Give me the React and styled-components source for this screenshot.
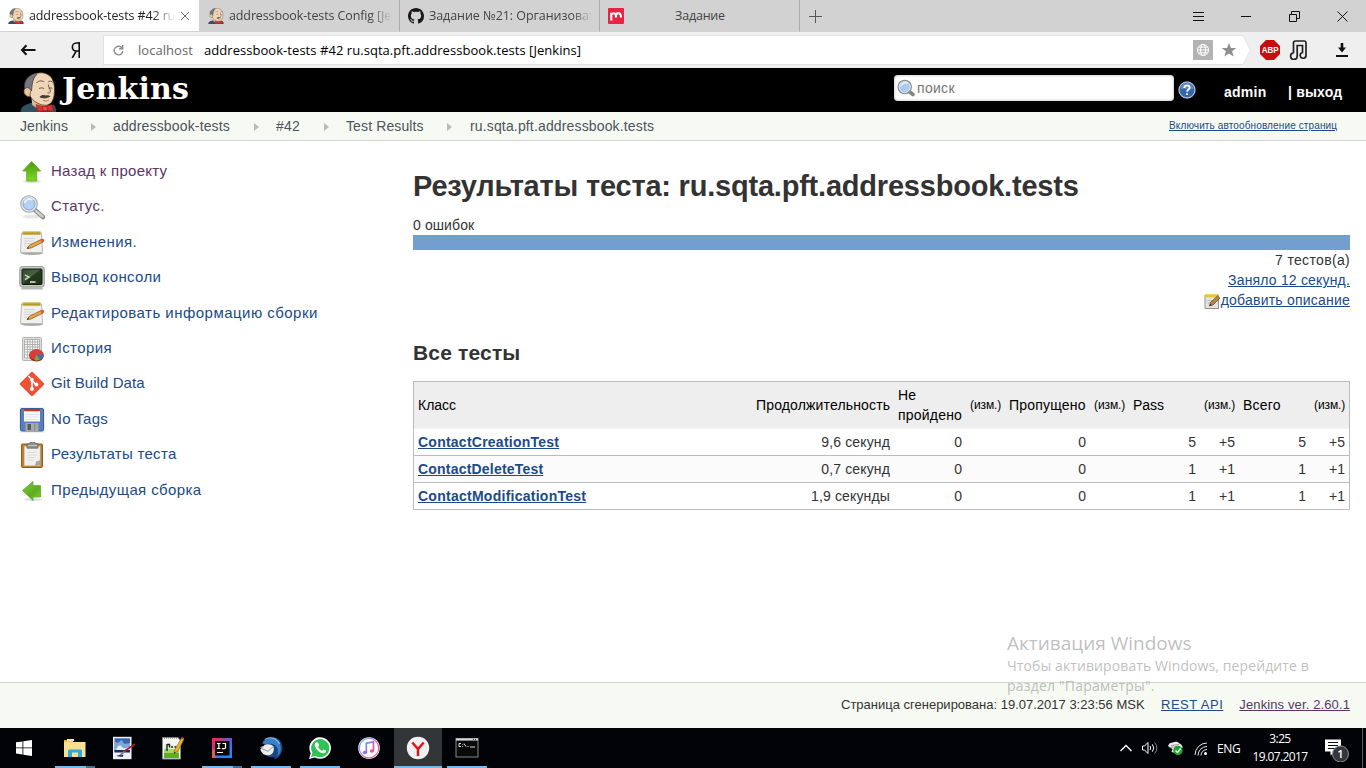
import React from "react";
import styled, { createGlobalStyle, css } from "styled-components";

const sans = '"Liberation Sans", Arial, sans-serif';
const ui = '"Open Sans", "Noto Sans", sans-serif';
const link = "#204a87";
const visited = "#5c3566";

const Global = createGlobalStyle`
  * { box-sizing: border-box; }
  body { margin: 0; background: #fff; font-family: ${sans}; font-size: 14px; color: #333; overflow: hidden; }
  svg { display: block; flex: none; }
`;

const track = css`letter-spacing: ${(p) => p.$ls || 0}px; white-space: nowrap;`;

const Screen = styled.div`
  width: 1366px; height: 768px; position: relative; display: flex; flex-direction: column; overflow: hidden;
`;

/* ---------- browser chrome ---------- */
const TabBar = styled.div`height: 32px; background: #d2d2d2; display: flex; font-family: ${ui}; flex: none;`;
const Tab = styled.div`
  width: 200px; height: 32px; padding: 0 ${(p) => p.$end || 7}px 0 8px; display: flex; align-items: center; gap: 5px;
  background: ${(p) => (p.$active ? "#fff" : "#d2d2d2")};
  border-right: 1px solid ${(p) => (p.$active ? "#d2d2d2" : "#acacac")};
  border-bottom: 1px solid ${(p) => (p.$active ? "#d0d0d0" : "#d2d2d2")};
`;
const TabTitle = styled.div`
  flex: 1; overflow: hidden; font-size: 12.5px; line-height: 20px; color: ${(p) => p.$color || "#444"};
  text-align: ${(p) => (p.$center ? "center" : "left")};
  ${track}
  ${(p) => p.$fade && css`mask-image: linear-gradient(90deg, #000 calc(100% - ${p.$fade}px), transparent);`}
`;
const NewTab = styled.div`width: 31px; display: flex; align-items: center; justify-content: center;`;
const WindowButtons = styled.div`margin-left: auto; display: flex; align-items: center;`;
const WindowButton = styled.div`width: 48px; height: 32px; display: flex; align-items: center; padding-left: 19px;`;

const Toolbar = styled.div`
  height: 36px; background: #efefef; display: flex; align-items: center; flex: none; font-family: ${ui}; padding-left: 20px;
`;
const ToolSlot = styled.div`width: ${(p) => p.$w}px; display: flex; align-items: center; flex: none;`;
const Omnibox = styled.div`
  width: 1140px; height: 30px; background: #fff; border: 1px solid #e2e2e2; border-right: 0; display: flex; align-items: center;
  padding-left: 9px; font-size: 13px; color: #000; flex: none;
`;
const Host = styled.span`margin-left: 13px; width: 56px; color: #666; line-height: 20px; ${track}`;
const PageTitle = styled.span`margin-left: 10px; line-height: 20px; ${track}`;
const OmniActions = styled.div`margin-left: auto; display: flex; align-items: center; gap: 8px; padding-right: 6px;`;

/* ---------- Jenkins header ---------- */
const Header = styled.header`height: 44px; background: #000; display: flex; flex: none; padding-left: 20px; color: #fff;`;
const Logo = styled.div`display: flex; width: 874px; align-items: flex-end;`;
const Wordmark = styled.span`
  font-family: "DejaVu Serif", serif; font-weight: 700; font-size: 30px; line-height: 40px; margin-left: 5px; margin-bottom: 3px; ${track}
`;
const Search = styled.div`
  width: 280px; height: 26px; margin-top: 7px; border-radius: 4px; background: #fff; display: flex; align-items: center;
  padding-left: 3px; gap: 2px; color: #757575; box-shadow: inset 0 0 3px #aaa; font-size: 14px;
`;
const SearchText = styled.span`${track}`;
const Help = styled.div`margin: 13px 0 0 4px; width: 46px;`;
const HeaderLink = styled.span`font-weight: 700; font-size: 14px; line-height: 20px; margin-top: 14px; width: ${(p) => p.$w}px; ${track}`;

const Breadcrumbs = styled.nav`
  height: 29px; background: #f6faf2; border-bottom: 1px solid #d3d7cf; display: flex; align-items: center; flex: none;
  padding: 0 29px 0 20px; color: #4d545d;
`;
const Crumb = styled.span`width: ${(p) => p.$w}px; line-height: 20px; flex: none; ${track}`;
const CrumbArrow = styled.span`
  width: 5px; height: 8px; flex: none; margin-top: 2px; background: #bababa; clip-path: polygon(0 0, 100% 50%, 0 100%); margin-right: ${(p) => p.$after}px;
`;
const AutoRefresh = styled.a`
  margin-left: auto; width: 168px; font-size: 10px; line-height: 14px; color: ${link}; text-decoration: underline; ${track}
`;

/* ---------- page body ---------- */
const Body = styled.div`height: 541px; display: flex; flex: none;`;
const SidePanel = styled.aside`width: 413px; padding: 12.400px 0 0 19px;`;
const Task = styled.a`
  height: 35.4px; display: flex; align-items: center; gap: 6px; font-size: 15px; color: ${(p) => (p.$visited ? visited : link)};
`;
const TaskIcon = styled.span`width: 26px; height: 26px; flex: none; margin-top: 2px;`;
const TaskLabel = styled.span`line-height: 20px; ${track}`;

const Main = styled.main`width: 937px; padding-top: 27px;`;
const Title = styled.h1`margin: 0; font-size: 29px; line-height: 36px; font-weight: 700; ${track}`;
const Failures = styled.div`margin-top: 11px; line-height: 20px; ${track}`;
const ResultBar = styled.div`height: 15px; background: #729fcf;`;
const Summary = styled.div`display: flex; flex-direction: column; align-items: flex-end; line-height: 20px;`;
const SummaryText = styled.span`${track}`;
const SummaryLink = styled.a`color: ${link}; text-decoration: underline; ${track}`;
const EditRow = styled.span`display: flex; align-items: center; height: 20px;`;
const NoteIcon = styled.span`margin-top: 3px;`;
const SubTitle = styled.h2`margin: 30px 0 0; font-size: 21px; line-height: 26px; ${track}`;

const Table = styled.div`margin-top: 15px; border: 1px solid #bbb;`;
const Row = styled.div`
  display: grid; grid-template-columns: 338px 142px 72px 39px 85px 39px 71px 39px 71px 39px; align-items: center;
  height: ${(p) => (p.$last ? 26 : 27)}px; border-bottom: ${(p) => (p.$last ? 0 : 1)}px solid #bbb;
  background: ${(p) => (p.$odd ? "#fbfbfb" : "#fff")};
`;
const HeadRow = styled(Row)`height: 47px; background: #eee; border-bottom: 1px solid #f4f4f4; color: #000;`;
const Cell = styled.div`
  padding: 0 4px; line-height: 20px; text-align: ${(p) => (p.$right ? "right" : "left")};
  font-size: ${(p) => (p.$small ? 12 : 14)}px;
  letter-spacing: ${(p) => p.$ls || 0}px; white-space: ${(p) => (p.$wrap ? "pre-line" : "nowrap")};
`;
const TestLink = styled.a`font-weight: 700; color: ${link}; text-decoration: underline; ${track}`;

const Footer = styled.footer`
  height: 46px; background: #f6faf2; border-top: 1px solid #d3d7cf; flex: none; display: flex; justify-content: flex-end;
  padding: 12px 16px 0 0; font-size: 13px; line-height: 20px;
`;
const FooterText = styled.span`width: ${(p) => p.$w}px; color: #333; ${track}`;
const FooterLink = styled.a`color: ${(p) => (p.$visited ? visited : link)}; text-decoration: underline; margin-right: ${(p) => p.$gap || 0}px; ${track}`;

const Watermark = styled.div`
  position: absolute; left: 1007px; top: 630px; font-family: ${ui}; color: rgba(150, 150, 150, 0.62); pointer-events: none;
`;
const WatermarkTitle = styled.div`font-size: 19px; line-height: 26px; ${track}`;
const WatermarkText = styled.div`font-size: 14px; line-height: 20px; ${track}`;

/* ---------- taskbar ---------- */
const Taskbar = styled.div`
  height: 40px; background: #010307; display: flex; flex: none; color: #fff; font-family: ${ui}; font-size: 12px;
`;
const StartButton = styled.div`width: 48px; margin-right: 3px; display: flex; align-items: center; justify-content: center;`;
const AppSlot = styled.div`
  width: 48px; margin-right: 1px; height: 40px; padding-top: 8px; display: flex; flex-direction: column; align-items: center;
  justify-content: space-between; background: ${(p) => (p.$active ? "#333639" : "transparent")};
`;
const RunMark = styled.div`
  height: 2px; width: ${(p) => (p.$wide ? 48 : 40)}px;
  background: ${(p) => (p.$stack ? "linear-gradient(90deg,#76b9ed 31px,#486f8f 31px)" : p.$on ? "#76b9ed" : "transparent")};
`;
const Tray = styled.div`margin-left: auto; display: flex; align-items: center;`;
const TrayIcon = styled.div`width: ${(p) => p.$w}px; display: flex; flex: none;`;
const Lang = styled.span`width: 32px; ${track}`;
const Clock = styled.div`width: 62px; text-align: center; line-height: 18px; ${track}`;
const DesktopEdge = styled.div`width: 4px; height: 40px; border-left: 1px solid #5a5c5f;`;

/* ---------- drawings ---------- */
const Butler = ({ w, h }) => (
  <svg width={w} height={h} viewBox="0 0 36 40" preserveAspectRatio="none">
    <path d="M.5 40c.5-4 2-6 6-7.500l5-2 12 4 9-2c2 1.500 2.700 4 2.700 7.500z" fill="#335061" />
    <path d="M11 25l1 8 7 5 7-3 2-4z" fill="#dcbd97" />
    <path d="M8 18C6 10 9 3 16 1.300c7-1.800 13 1 15.500 6 2 4 2.300 9 2 13-.2 5-1.500 9-4 11.200-3 2.600-8 2.200-12-.2C12 28.800 9 24 8 18z" fill="#f0d6b7" stroke="#3d3328" strokeWidth=".7" />
    <path d="M4.500 17C3 10 7 3.500 15 1.300l1.500 1.200C13.500 5 12.500 8.500 12 12c-.3 2-.5 4-.8 7-1-2.500-3.900-4-6.700-2z" fill="#77777b" stroke="#2c2a2a" strokeWidth=".6" />
    <path d="M5 16.500c-2.500 2.500-1 8 4.500 8.300l1-6.300c-1.200-2.500-3.700-3.700-5.500-2z" fill="#e9c79d" stroke="#5a4736" strokeWidth=".7" />
    <path d="M16 11c2-2.600 5.500-2.600 7.500-1M27.500 10c1.500-1.400 3.500-1 4.500.5M18.500 16.500c1.500-.8 3.500-.8 5 0M28 16.500c1-.7 2.500-.7 3.500 0M27.500 12.500c.5 3.500 2.500 5.500 2 7.500-.8 1-1.800 1.200-2.800.8" fill="none" stroke="#5b4737" strokeWidth=".9" />
    <path d="M19 25c1.800-2.200 4.200-2.400 6.200-1.500 1.700-.6 3.300-.2 4.300 1.100-2.800 2-7.500 2.600-10.500.4z" fill="#4a3c33" />
    <path d="M22.500 28.500c1.800.7 3.800.7 5.500-.4" stroke="#a06e52" fill="none" strokeWidth=".9" />
    <path d="M15.500 32.500l7 2 8.500-2 1.700 6.700-7-.7-8.500 1.500z" fill="#d8302c" stroke="#8a1a17" strokeWidth=".5" />
    <path d="M22 34.300h4l1 4.500h-4.700z" fill="#f04a44" stroke="#7e1815" strokeWidth=".6" />
  </svg>
);
const Magnifier = ({ size }) => (
  <svg width={size} height={size} viewBox="0 0 26 26">
    <ellipse cx="13" cy="22.500" rx="9" ry="2" fill="#ddd" opacity=".7" />
    <path d="M16 16l8 7" stroke="#8c8d88" strokeWidth="4.500" strokeLinecap="round" />
    <path d="M17 17l6.500 5.500" stroke="#cfd0cc" strokeWidth="2.400" strokeLinecap="round" />
    <circle cx="10" cy="10" r="8.200" fill="#a9c7ee" stroke="#a5a6a2" strokeWidth="1.200" />
    <circle cx="10" cy="10" r="6.900" fill="#b9d4f5" stroke="#e5e8ea" strokeWidth="1.600" />
    <circle cx="10" cy="10" r="6" fill="#b4d0f3" stroke="#7da2d4" strokeWidth=".9" />
    <path d="M5.500 9a5 5 0 0 1 8-3" stroke="#e8f2fd" strokeWidth="2" fill="none" />
  </svg>
);
const SearchGlass = () => (
  <svg width="18" height="18" viewBox="0 0 18 18">
    <path d="M12 12.500l4 3" stroke="#85857f" strokeWidth="3.600" strokeLinecap="round" />
    <circle cx="7.700" cy="8" r="6.700" fill="#a9c9f0" stroke="#8f908c" strokeWidth="1.200" />
    <circle cx="7.700" cy="8" r="5.400" fill="none" stroke="#dfe6ee" />
    <path d="M4 7.500a4 4 0 0 1 6.500-2.700" stroke="#e6f1fd" strokeWidth="1.500" fill="none" />
  </svg>
);
const ArrowUp = () => (
  <svg width="26" height="26" viewBox="0 0 26 26">
    <defs><linearGradient id="gUp" x2="0" y2="1"><stop stopColor="#4e9a06" /><stop offset=".5" stopColor="#66b81d" /><stop offset="1" stopColor="#7fdc1e" /></linearGradient></defs>
    <ellipse cx="13" cy="22.500" rx="9" ry="1.500" fill="#ddd" />
    <path d="M12.700 2.500l9 9.500h-4v10h-10v-10h-4z" fill="url(#gUp)" stroke="#5aa61a" strokeWidth=".8" strokeLinejoin="round" />
  </svg>
);
const ArrowLeft = () => (
  <svg width="26" height="26" viewBox="0 0 26 26">
    <defs><linearGradient id="gLf" x2="1" y2="1"><stop stopColor="#7ccb3c" /><stop offset=".6" stopColor="#5ead20" /><stop offset="1" stopColor="#7fd02c" /></linearGradient></defs>
    <ellipse cx="14" cy="21.500" rx="9" ry="1.500" fill="#ddd" />
    <path d="M3.500 12.500L14 3.500v4h7.500v11.500H14v3.500z" fill="url(#gLf)" stroke="#62a638" strokeWidth=".8" strokeLinejoin="round" />
  </svg>
);
const Notepad = () => (
  <svg width="26" height="26" viewBox="0 0 26 26">
    <ellipse cx="13" cy="23.300" rx="11" ry="1.600" fill="#aaa" />
    <path d="M2.500 3h20l1 19.500h-22z" fill="#f0f0ee" stroke="#b9bab6" />
    <rect x="3.500" y="1.500" width="18" height="3.200" fill="#b59a2a" />
    <path d="M4 1.800h18" stroke="#e0ca62" strokeWidth="1.200" strokeDasharray="1.500 1" />
    <path d="M5 8.500h11M5 11h10M5 13.500h9M5 16h5" stroke="#cfcfcd" strokeWidth=".9" />
    <path d="M8 18.500l2.500-3.300L22.500 9.300l1.700 2.600-12 6z" fill="#e5a84e" stroke="#8b5a1a" strokeWidth=".8" />
    <path d="M21.500 9.800l2-1c1-.4 2.300 1.700 1.300 2.400l-1.800 1.200z" fill="#e2533b" />
    <path d="M8 18.500l1-1.500 1.200 1.200z" fill="#222" />
  </svg>
);
const Terminal = () => (
  <svg width="26" height="26" viewBox="0 0 26 26">
    <defs><linearGradient id="gTm" x1="0" y1="0" x2="1" y2="1"><stop stopColor="#2f4a28" /><stop offset=".45" stopColor="#47633f" /><stop offset=".5" stopColor="#243a1f" /><stop offset="1" stopColor="#20331b" /></linearGradient></defs>
    <rect x=".7" y="1.500" width="24.600" height="20.500" rx="2.500" fill="#c9cac6" stroke="#8e8f8b" strokeWidth=".8" />
    <path d="M3 22h20l1 2.500H2z" fill="#b6b7b3" />
    <rect x="3" y="4" width="20" height="15.500" rx="1" fill="url(#gTm)" stroke="#111b0e" />
    <path d="M6 10l4 2-4 2.500M11 17h5.500" stroke="#dfe9dc" strokeWidth="1.300" fill="none" />
    <circle cx="18" cy="21" r=".8" fill="#8ae234" />
  </svg>
);
const History = () => (
  <svg width="26" height="26" viewBox="0 0 26 26">
    <rect x="3.500" y="1.500" width="19" height="23" rx="1" fill="#dededc" stroke="#b4b5b1" />
    <rect x="5.500" y="3.500" width="15" height="18.500" fill="#fafafa" />
    <path d="M5.500 3.500h15v18.500h-15zM8.500 3.500v18.500M11 3.500v18.500M13.500 3.500v18.500M16 3.500v18.500M18.500 3.500v18.500M5.500 6h15M5.500 8.500h15M5.500 11h15M5.500 13.500h15M5.500 16h15M5.500 19h15" stroke="#a6a7a4" strokeWidth=".8" fill="none" />
    <ellipse cx="17.500" cy="19.600" rx="7.300" ry="6" fill="#9c1414" />
    <ellipse cx="17.500" cy="18.600" rx="7" ry="5.400" fill="#dd3b3b" />
    <path d="M17.500 18.600l7-.2c.2 2.800-1.500 4.500-3.800 5.600z" fill="#3d70b8" />
    <path d="M17.500 18.600l3.300 5.400c-1.800.6-3.800.7-5.300.3z" fill="#73b528" />
  </svg>
);
const Git = () => (
  <svg width="26" height="26" viewBox="0 0 26 26">
    <rect x="4" y="4" width="18" height="18" rx="1.400" fill="#f05033" transform="rotate(45 13 13)" />
    <path d="M9.500 5l3.500 4v9M13 9.500l4.300 4.300" stroke="#fff" strokeWidth="1.700" fill="none" />
    <circle cx="12.900" cy="8.700" r="1.900" fill="#fff" /><circle cx="12.900" cy="17.900" r="2" fill="#fff" /><circle cx="17.400" cy="13.500" r="2" fill="#fff" />
  </svg>
);
const Floppy = () => (
  <svg width="26" height="26" viewBox="0 0 26 26">
    <rect width="26" height="26" fill="#eceef0" />
    <rect x="1.500" y="1.500" width="23" height="22.500" rx="1.500" fill="#5680bd" stroke="#3a5f96" />
    <rect x="5" y="2.300" width="16" height="12.200" fill="#fafafa" />
    <rect x="5" y="2" width="16" height="2.200" fill="#d8301f" />
    <path d="M6.500 7.500h13M6.500 10h13M6.500 12.500h13" stroke="#dcdcdc" strokeWidth=".8" />
    <rect x="6.500" y="16" width="13" height="8" fill="#a8aaa9" />
    <rect x="8.500" y="17" width="3.500" height="6" fill="#5a5c5c" />
    <rect x="15" y="16.500" width="1.200" height="7" fill="#888" />
  </svg>
);
const Clipboard = () => (
  <svg width="26" height="26" viewBox="0 0 26 26">
    <rect x="2.500" y="2" width="21" height="23.500" rx="1" fill="#b88237" stroke="#8d5b17" />
    <path d="M5.500 4.500h15.500v19H5.500z" fill="#f1f1f0" stroke="#d5d5d3" strokeWidth=".6" />
    <path d="M8.500 10.500h9M8.500 13h9M8.500 15.500h7M8.500 18h6" stroke="#d5d6d3" strokeWidth=".8" />
    <path d="M21 17.500v6h-7c3 0 3-3 3-4.500 2 .5 3.500 0 4-1.500z" fill="#a6a8a5" />
    <path d="M8 1.800h3V.300h5v1.500h3v4.400H8z" fill="#8f928e" stroke="#61645f" strokeWidth=".7" />
    <path d="M9 3.500h9" stroke="#c4c6c2" />
  </svg>
);
const SmallNote = () => (
  <svg width="17" height="17" viewBox="0 0 17 17">
    <path d="M1 2h13.500v13.500H1z" fill="#e4e5e3" stroke="#8f918d" />
    <path d="M1 1h13.500v3.500H1z" fill="#e8c53a" />
    <path d="M1 1.300h13.500" stroke="#f8e793" strokeDasharray="1.500 1" />
    <path d="M3.500 7.500h7M3.500 10h4" stroke="#bbb" />
    <path d="M5.500 13l1-3.500L13.500 3l2.300 2-6.500 6.800z" fill="#b18745" stroke="#6c4e1d" strokeWidth=".8" />
    <path d="M5.500 13l.6-2 1.500 1.200z" fill="#222" />
  </svg>
);
const GitHub = () => (
  <svg width="16" height="16" viewBox="0 0 16 16">
    <path fill="#1b1817" d="M8 0C3.580 0 0 3.580 0 8c0 3.540 2.290 6.530 5.470 7.590.4.070.55-.17.55-.38 0-.19-.01-.82-.01-1.490-2.010.37-2.530-.49-2.690-.94-.09-.23-.48-.94-.82-1.130-.28-.15-.68-.52-.01-.53.63-.01 1.080.58 1.230.82.72 1.210 1.870.87 2.330.66.07-.52.28-.87.51-1.070-1.780-.2-3.640-.89-3.640-3.950 0-.87.31-1.590.82-2.150-.08-.2-.36-1.020.08-2.120 0 0 .67-.21 2.200.82.64-.18 1.320-.27 2-.27s1.360.09 2 .27c1.530-1.040 2.200-.82 2.200-.82.44 1.100.16 1.920.08 2.120.51.56.82 1.270.82 2.150 0 3.070-1.870 3.750-3.650 3.950.29.25.54.73.54 1.480 0 1.070-.01 1.930-.01 2.200 0 .21.15.46.55.38A8.010 8.010 0 0 0 16 8c0-4.420-3.580-8-8-8z" />
  </svg>
);
const Mirapolis = () => (
  <svg width="16" height="16" viewBox="0 0 16 16">
    <rect width="16" height="16" rx="1" fill="#e62545" />
    <path d="M3.300 12.500V4.800M3.300 6.500Q5.500 4.600 7 5.600Q8 6.200 8 9.500M8 6.800Q9 4.800 11 5.200Q13 5.700 13 9.500" fill="none" stroke="#fff" strokeWidth="2.100" />
  </svg>
);
const Stroke = ({ d, w = 11, h = 11, sw = 1, color = "#111", children }) => (
  <svg width={w} height={h} viewBox={`0 0 ${w} ${h}`} fill="none" stroke={color} strokeWidth={sw}><path d={d} />{children}</svg>
);
const HelpIcon = () => (
  <svg width="18" height="18" viewBox="0 0 18 18">
    <circle cx="9" cy="9" r="8" fill="#3566a8" stroke="#a9bddb" strokeWidth="1.300" />
    <path d="M2.500 8a6.500 6.500 0 0 1 13 0z" fill="#6d93c8" opacity=".7" />
    <path d="M6.300 7c0-3.600 5.600-3.400 5.400-.2-.1 1.700-2.600 1.800-2.600 3.900M9.100 12.200v1.900" stroke="#fff" strokeWidth="1.900" fill="none" />
  </svg>
);

const Explorer = () => (
  <svg width="24" height="24" viewBox="0 0 24 24">
    <path d="M1 4h8l1.500 2H22.500v15H1z" fill="#fbe08f" /><path d="M1 4h8l1 1.500H1z" fill="#e9a93a" /><rect x="4" y="3" width="7" height="2" fill="#f7e8b2" />
    <path d="M5 21v-6.500l1-1h12l1 1V21h-4v-4.500H9V21z" fill="#2fa8dc" />
  </svg>
);
const PaintApp = () => (
  <svg width="24" height="24" viewBox="0 0 24 24">
    <rect x="1" y=".8" width="18.500" height="22.400" fill="#eef1f6" /><rect x="2.500" y="2.300" width="15.500" height="13.500" fill="#3767b3" />
    <path d="M2.500 5l3 2 4-3 3 4 5.500-1v8h-15.500z" fill="#9dbbe2" opacity=".75" /><path d="M4 14c1-4 4-6 6-3s5 0 8 0v3z" fill="#e3ecf7" /><rect x="2.500" y="14" width="15.500" height="2.500" fill="#142c60" />
    <path d="M4 20l5-1.500 2.500.5-1 2z" fill="#223056" /><path d="M8.500 19L13 15" stroke="#888" strokeWidth="2" /><path d="M12 15.500L23 8" stroke="#a4232f" strokeWidth="1.900" />
  </svg>
);
const NotepadPP = () => (
  <svg width="24" height="24" viewBox="0 0 24 24">
    <path d="M1.500 1.500h15.500l2.500 3V23h-18z" fill="#f4f5f1" stroke="#8a8a8a" />
    <path d="M3 9h15v4H3z" fill="#e2f2cd" /><path d="M3 13h15v9H3z" fill="#a5d868" /><path d="M3 17h15v5H3z" fill="#5fae1c" />
    <path d="M3 2h13" stroke="#666" strokeDasharray="1 1" />
    <path d="M6 8v7M6 8.500h2.500v3M10 11h2M13.500 11h2" stroke="#222" strokeWidth="1.400" fill="none" />
    <path d="M13 17.500l1-4L20.500 2l2.500 1L17 15z" fill="#f0b830" stroke="#8b5a12" strokeWidth=".7" /><path d="M20.700 1l2.500 1-.8 1.600-2.500-1z" fill="#c44" /><path d="M13 17.500l.4-1.800 1.200.7z" fill="#222" />
  </svg>
);
const Idea = () => (
  <svg width="24" height="24" viewBox="0 0 24 24">
    <defs><linearGradient id="gIj" x2="1" y2="1"><stop stopColor="#f3254f" /><stop offset=".42" stopColor="#b43a8c" /><stop offset=".55" stopColor="#3a6ff0" /><stop offset="1" stopColor="#2290f2" /></linearGradient></defs>
    <rect x="2" y="2" width="20" height="20" fill="url(#gIj)" /><path d="M2 12l4 4v6H2z" fill="#e8683a" opacity=".8" /><path d="M10 2h12v7l-3-4z" fill="#6a55d8" opacity=".7" />
    <rect x="5" y="5" width="14.500" height="14.500" fill="#0b0708" />
    <path d="M7 7.500h3.500M8.800 7.500v5M7 12.500h3.500M12.500 7.500h3v4q0 1.200-1.200 1.200H12M7 16.500h6" stroke="#fff" strokeWidth="1.200" fill="none" />
  </svg>
);
const Thunderbird = () => (
  <svg width="26" height="24" viewBox="0 0 26 24">
    <path d="M5 5C9 0 17-.5 21.500 4c4.500 5 3.500 12-.5 16.500-1.500 1.500-3.500 2.500-5 3l1-2.500c-3 1-6.500.5-8.500-2z" fill="#1a4784" />
    <path d="M4 7.500C8 2 16 .5 20.500 6c4 5 2.500 11-1 14.500 1.500-6 0-11.500-5-12.500-4-.6-6.500.5-10.500-.5z" fill="#3a80c6" />
    <path d="M7 3.500c5-3 12-1.500 14.500 4.500" stroke="#84bfe8" strokeWidth="1.200" fill="none" />
    <path d="M2.300 13.500L6 9.500c3-2 7-1.500 9.500 1 1 4-.5 7.500-3.500 8.500-4 1-8-.5-9.700-5.500z" fill="#eeeeec" /><path d="M3.500 12.500l6.500 2.800 5-4.500" stroke="#8c98a8" fill="none" /><path d="M1.500 12l3-2 1 1.500z" fill="#dbb58e" />
  </svg>
);
const WhatsApp = () => (
  <svg width="24" height="24" viewBox="0 0 24 24">
    <path d="M1 23l1.700-5.800A10.800 10.800 0 1 1 7 21.500z" fill="#fff" /><path d="M3 21l1.400-4.200A9.100 9.100 0 1 1 7.600 20z" fill="#30c254" />
    <path d="M8.500 6.300c-.8 0-1.800 1-1.800 2.500 0 3.500 5 8.700 8.900 8.500 1.400-.1 2.600-1.200 2.500-2.500-.8-.8-1.800-1.200-2.600-1.400l-1.400 1.500c-1.900-.8-3.200-2-4-3.800l1.100-1.400c-.2-1-.7-2.300-1.300-3.300z" fill="#fff" />
  </svg>
);
const ITunes = () => (
  <svg width="24" height="24" viewBox="0 0 24 24">
    <defs><linearGradient id="gIt" x2="1" y2="1"><stop stopColor="#3fb5f4" /><stop offset=".5" stopColor="#c560dd" /><stop offset="1" stopColor="#fc4a67" /></linearGradient></defs>
    <circle cx="12" cy="12" r="10.800" fill="#fff" /><circle cx="12" cy="12" r="9.700" fill="#fff" stroke="url(#gIt)" strokeWidth="1.100" />
    <path d="M9.300 16.200V7.300l7.200-1.600v8.800" stroke="url(#gIt)" strokeWidth="1.700" fill="none" /><ellipse cx="7.900" cy="16.500" rx="2.200" ry="1.700" fill="#7b7af0" /><ellipse cx="15" cy="15" rx="2.200" ry="1.700" fill="#e9539f" />
  </svg>
);
const Yandex = () => (
  <svg width="24" height="24" viewBox="0 0 24 24">
    <circle cx="12" cy="12" r="11.200" fill="#f0f0f0" /><path d="M6.300 6.500l5.700 6.500 5.700-6.500M12 12.500V20" stroke="#e0161b" strokeWidth="2.500" fill="none" />
  </svg>
);
const Cmd = () => (
  <svg width="24" height="24" viewBox="0 0 24 24">
    <rect x="1" y="2.500" width="22" height="18.500" fill="#0a0a0a" stroke="#858789" /><path d="M1 3.500h22" stroke="#cfd3d6" strokeWidth="2.200" /><path d="M18 3.500h1M20 3.500h1" stroke="#444" />
    <path d="M6 7.500H4v3h2M7.700 8v.8M7.700 10v.8M9 7.500l2 3.200M12.500 10.500h1M15 11h5" stroke="#ddd" strokeWidth="1" fill="none" />
  </svg>
);

/* ---------- data ---------- */
const tasks = [
  [ArrowUp, "Назад к проекту", 0.27, true],
  [Magnifier, "Статус.", 0.3, true],
  [Notepad, "Изменения.", 0.42],
  [Terminal, "Вывод консоли", 0.35],
  [Notepad, "Редактировать информацию сборки", 0.47],
  [History, "История", 0.4],
  [Git, "Git Build Data", 0.08],
  [Floppy, "No Tags", 0.35],
  [Clipboard, "Результаты теста", 0.3],
  [ArrowLeft, "Предыдущая сборка", 0.39],
];
const tests = [
  { name: "ContactCreationTest", ls: 0.24, time: "9,6 секунд", n: "5" },
  { name: "ContactDeleteTest", ls: 0.2, time: "0,7 секунд", n: "1" },
  { name: "ContactModificationTest", ls: 0.26, time: "1,9 секунды", n: "1" },
];
const apps = [
  { Icon: Explorer, stack: true }, { Icon: PaintApp }, { Icon: NotepadPP }, { Icon: Idea, stack: true },
  { Icon: Thunderbird, on: true }, { Icon: WhatsApp, on: true }, { Icon: ITunes }, { Icon: Yandex, on: true, active: true }, { Icon: Cmd, on: true },
];

export default function App() {
  return (
    <Screen>
      <Global />
      <TabBar>
        <Tab $active $end={9}>
          <Butler w={16} h={16} />
          <TabTitle $color="#222" $fade={22} $ls={-0.12}>addressbook-tests #42 ru.</TabTitle>
          <Stroke d="M1 1l8 8M9 1l-8 8" w={10} h={10} color="#666" />
        </Tab>
        <Tab>
          <Butler w={16} h={16} />
          <TabTitle $fade={22} $ls={-0.12}>addressbook-tests Config [Je</TabTitle>
        </Tab>
        <Tab>
          <GitHub />
          <TabTitle $fade={20} $ls={-0.06}>Задание №21: Организоват</TabTitle>
        </Tab>
        <Tab $end={28}>
          <Mirapolis />
          <TabTitle $center $ls={-0.2}>Задание</TabTitle>
        </Tab>
        <NewTab><Stroke d="M6.500 0v13M0 6.500h13" w={13} h={13} color="#555" /></NewTab>
        <WindowButtons>
          <WindowButton><Stroke d="M0 1.500h11M0 5.500h11M0 9.500h11" /></WindowButton>
          <WindowButton><Stroke d="M0 5.500h10" /></WindowButton>
          <WindowButton><Stroke d="M.500 3.500h7v7h-7zM2.500 3V.500h8v7H8" /></WindowButton>
          <WindowButton><Stroke d="M.500.500l10 10M10.500.500l-10 10" /></WindowButton>
        </WindowButtons>
      </TabBar>

      <Toolbar>
        <ToolSlot $w={50}><Stroke d="M15.500 6H2M6.500 1.300L2 6l4.500 4.700" w={16} h={12} sw={2} /></ToolSlot>
        <ToolSlot $w={33}><Stroke d="M9.200 0v16M9.200 1H6.500C1 1 1 9 6.500 9h2.700M6.300 9L2.200 16" w={12} h={16} sw={1.600} /></ToolSlot>
        <Omnibox>
          <Stroke d="M9.300 4.500A4.300 4.300 0 1 0 9.800 7M9.700 1v3.800H6" w={12} h={12} sw={1.400} color="#8a8a8a" />
          <Host $ls={0.05}>localhost</Host>
          <PageTitle $ls={0.05}>addressbook-tests #42 ru.sqta.pft.addressbook.tests [Jenkins]</PageTitle>
          <OmniActions>
            <svg width="20" height="20" viewBox="0 0 20 20">
              <rect width="20" height="20" fill="#b3b3b3" />
              <g fill="none" stroke="#fff" strokeWidth="1"><circle cx="10" cy="10" r="5.500" /><ellipse cx="10" cy="10" rx="2.500" ry="5.500" /><path d="M4.500 10h11M5.500 7.200h9M5.500 12.800h9" /></g>
            </svg>
            <svg width="16" height="16" viewBox="0 0 16 16"><path fill="#8f8f8f" d="M8 1l2 5h5.300l-4.200 3.300 1.600 5.200L8 11.400l-4.700 3.100 1.600-5.200L.700 6H6z" /></svg>
          </OmniActions>
        </Omnibox>
        <ToolSlot $w={17}>
          <svg width="8" height="30" viewBox="0 0 8 30"><path d="M0 0L7.500 15 0 30z" fill="#fff" /><path d="M0 .500L7.500 15 0 29.500" fill="none" stroke="#e2e2e2" /></svg>
        </ToolSlot>
        <ToolSlot $w={28}>
          <svg width="20" height="20" viewBox="0 0 20 20">
            <path d="M6 0h8l6 6v8l-6 6H6l-6-6V6z" fill="#c70d0d" />
            <text x="1.700" y="13.300" fontFamily="Liberation Sans, sans-serif" fontSize="9" fontWeight="700" fill="#fff" textLength="16.800" lengthAdjust="spacingAndGlyphs">ABP</text>
          </svg>
        </ToolSlot>
        <ToolSlot $w={47}>
          <Stroke d="M5.500 13V3C5.500 1.700 6.500 1 7.500 1H16.500C17.500 1 18 1.700 18 2.700V15.300A2.900 2.900 0 1 1 14.500 12.500V5.500H9.200V16.200A3.300 3.300 0 1 1 5.500 12.900" w={20} h={20} sw={1.700} color="#222" />
        </ToolSlot>
        <ToolSlot $w={14}>
          <svg width="14" height="14" viewBox="0 0 14 14"><path d="M5.700 0h2.600v4.500H11L7 9.500 3 4.500h2.700zM1 12h12v2H1z" fill="#111" /></svg>
        </ToolSlot>
      </Toolbar>

      <Header>
        <Logo><Butler w={37} h={40} /><Wordmark $ls={0.15}>Jenkins</Wordmark></Logo>
        <Search><SearchGlass /><SearchText $ls={0.3}>поиск</SearchText></Search>
        <Help><HelpIcon /></Help>
        <HeaderLink $w={64} $ls={0.25}>admin</HeaderLink>
        <HeaderLink $w={60} $ls={0.17}>| выход</HeaderLink>
      </Header>

      <Breadcrumbs>
        <Crumb $w={71} $ls={0.08}>Jenkins</Crumb><CrumbArrow $after={17} />
        <Crumb $w={141} $ls={0.15}>addressbook-tests</Crumb><CrumbArrow $after={17} />
        <Crumb $w={48} $ls={0.2}>#42</Crumb><CrumbArrow $after={17} />
        <Crumb $w={101} $ls={0.12}>Test Results</Crumb><CrumbArrow $after={18} />
        <Crumb $w={190} $ls={0.15}>ru.sqta.pft.addressbook.tests</Crumb>
        <AutoRefresh $ls={0.13}>Включить автообновление страниц</AutoRefresh>
      </Breadcrumbs>

      <Body>
        <SidePanel>
          {tasks.map(([Icon, label, ls, seen]) => (
            <Task key={label} $visited={seen}>
              <TaskIcon><Icon size={26} /></TaskIcon>
              <TaskLabel $ls={ls}>{label}</TaskLabel>
            </Task>
          ))}
        </SidePanel>
        <Main>
          <Title $ls={-0.21}>Результаты теста: ru.sqta.pft.addressbook.tests</Title>
          <Failures $ls={0.1}>0 ошибок</Failures>
          <ResultBar />
          <Summary>
            <SummaryText $ls={0.33}>7 тестов(а)</SummaryText>
            <SummaryLink $ls={0.18}>Заняло 12 секунд.</SummaryLink>
            <EditRow><NoteIcon><SmallNote /></NoteIcon><SummaryLink $ls={0.22}>добавить описание</SummaryLink></EditRow>
          </Summary>
          <SubTitle $ls={0.17}>Все тесты</SubTitle>
          <Table>
            <HeadRow>
              <Cell>Класс</Cell>
              <Cell $right $ls={0.15}>Продолжительность</Cell>
              <Cell $wrap $ls={0.2}>{"Не\nпройдено"}</Cell>
              <Cell $small $ls={-0.1}>(изм.)</Cell>
              <Cell $ls={0.2}>Пропущено</Cell>
              <Cell $small $ls={-0.1}>(изм.)</Cell>
              <Cell>Pass</Cell>
              <Cell $small $ls={-0.1}>(изм.)</Cell>
              <Cell $ls={0.2}>Всего</Cell>
              <Cell $small $ls={-0.1}>(изм.)</Cell>
            </HeadRow>
            {tests.map(({ name, ls, time, n }, i) => (
              <Row key={name} $odd={i === 1} $last={i === 2}>
                <Cell><TestLink $ls={ls}>{name}</TestLink></Cell>
                <Cell $right $ls={0.14}>{time}</Cell>
                <Cell $right>0</Cell><Cell />
                <Cell $right>0</Cell><Cell />
                <Cell $right>{n}</Cell><Cell $right>+{n}</Cell>
                <Cell $right>{n}</Cell><Cell $right>+{n}</Cell>
              </Row>
            ))}
          </Table>
        </Main>
      </Body>

      <Footer>
        <FooterText $w={320}>Страница сгенерирована: 19.07.2017 3:23:56 MSK</FooterText>
        <FooterLink $gap={16} $ls={0.5}>REST API</FooterLink>
        <FooterLink $visited $ls={0.12}>Jenkins ver. 2.60.1</FooterLink>
      </Footer>

      <Taskbar>
        <StartButton>
          <svg width="16" height="16" viewBox="0 0 16 16"><path d="M0 2.300l6.500-.9v6.100H0zM7.300 1.300L16 0v7.500H7.300zM0 8.300h6.500v6.200L0 13.600zM7.300 8.300H16V16l-8.700-1.300z" fill="#fff" /></svg>
        </StartButton>
        {apps.map(({ Icon, on, stack, active }, i) => (
          <AppSlot key={i} $active={active}><Icon /><RunMark $on={on} $stack={stack} $wide={active} /></AppSlot>
        ))}
        <Tray>
          <TrayIcon $w={22}><Stroke d="M.500 7L6 1.500 11.500 7" w={12} h={8} sw={1.300} color="#fff" /></TrayIcon>
          <TrayIcon $w={26}>
            <Stroke d="M.500 5h2L6 1.500v11L2.500 9h-2zM8 5q1.500 2 0 4M10.300 3.300q3 3.700 0 7.400" w={17} h={14} color="#fff"><path d="M12.600 1.500q4.500 5.500 0 11" stroke="#888" /></Stroke>
          </TrayIcon>
          <TrayIcon $w={26}>
            <svg width="15" height="16" viewBox="0 0 15 16"><path d="M0 6c1-2.500 2-3.500 5-3.500 2-1.500 5-1 6.500 1C13.500 4.500 15 6 14.500 8l-5 1-2 4-4-1 1-3z" fill="#eee" /><path d="M3 5.500l8-1M1 7.500l8-1" stroke="#777" strokeWidth=".7" /><circle cx="10" cy="10.500" r="4.700" fill="#1fa32c" /><path d="M7.500 10.500l2 2 3.200-4" stroke="#fff" strokeWidth="1.500" fill="none" /></svg>
          </TrayIcon>
          <TrayIcon $w={23}>
            <Stroke d="M1 14A12 12 0 0 1 13 2M4 14.500A9 9 0 0 1 13 5.500M7 14.500A6 6 0 0 1 13 8.500" w={14} h={15} color="#e8e8e8"><circle cx="11.500" cy="12.500" r="1.500" fill="#fff" stroke="none" /></Stroke>
          </TrayIcon>
          <Lang $ls={-0.4}>ENG</Lang>
          <Clock $ls={-0.62}>3:25<br />19.07.2017</Clock>
          <TrayIcon $w={51}>
            <svg width="40" height="28" viewBox="0 0 40 28">
              <path d="M14 5.500h16v12H24l-4.500 4v-4H14z" fill="#fff" /><path d="M17 8.500h10M17 11.500h10M17 14.500h7" stroke="#111" />
              <circle cx="29.500" cy="20" r="8" fill="#33363a" stroke="#8d8f92" />
              <text x="29.500" y="24" textAnchor="middle" fontSize="11" fontWeight="600" fill="#fff" fontFamily="Open Sans, sans-serif">1</text>
            </svg>
          </TrayIcon>
          <DesktopEdge />
        </Tray>
      </Taskbar>

      <Watermark>
        <WatermarkTitle>Активация Windows</WatermarkTitle>
        <WatermarkText $ls={0.1}>Чтобы активировать Windows, перейдите в</WatermarkText>
        <WatermarkText $ls={0.2}>раздел "Параметры".</WatermarkText>
      </Watermark>
    </Screen>
  );
}
